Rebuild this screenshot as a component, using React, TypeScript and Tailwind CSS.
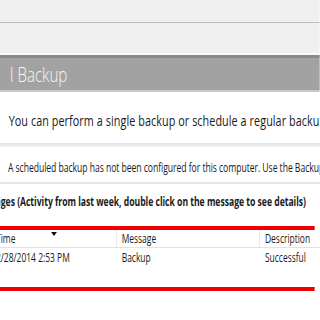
export default function App() {
  return (
    <div className="w-[320px] h-[320px] overflow-hidden bg-white">
      <div className="w-[444px] origin-top-left scale-x-[0.72] font-['Open_Sans',sans-serif] text-[#1a1a1a] leading-none">
        {/* top chrome */}
        <div className="h-[22px] bg-[#f0f0f0]" />
        <div className="h-[1px] bg-[#bcbcbc]" />
        <div className="h-[32px] bg-[#f0f0f0] border-b-2 border-[#fafafa]" />
        <div className="h-[3px] bg-[#8a8a8a]" />
        {/* title band */}
        <div className="h-[32px] bg-[#a2a2a2] pt-[6px] pl-[14px] whitespace-nowrap text-[21px] font-light text-[#f7f7f7]">
          l Backup
        </div>
        <div className="h-[2px] bg-[#c8c8c8]" />

        {/* intro */}
        <div className="h-[51px] pt-[21px] pl-[12px] text-[15px] tracking-[0.1px] whitespace-nowrap">
          You can perform a single backup or schedule a regular backup using this application.
        </div>
        <div className="h-[4px] bg-gradient-to-b from-[#e2e2e2] to-[#f4f4f4]" />
        <div className="h-[35px] pt-[15px] pl-[11px] text-[12px] tracking-[-0.08px] whitespace-nowrap">
          A scheduled backup has not been configured for this computer. Use the Backup Schedule Wizard or the Backup Schedule option.
        </div>
        <div className="h-[2px] bg-[#e6e6e6]" />

        {/* messages */}
        <div className="h-[42px] pt-[12px] flex whitespace-nowrap text-[12px] tracking-[-0.04px] font-bold">
          <div className="w-[1px] flex justify-end shrink-0">Messa</div>
          <span>ges (Activity from last week, double click on the message to see details)</span>
        </div>
        <div className="w-[437px] h-[4px] bg-[#ee0000]" />
        <div className="relative h-[18px] flex items-center text-[11.75px] whitespace-nowrap border-b border-[#e2e2e2]">
          <div className="w-[162px] h-full flex items-center border-r border-[#e2e2e2]">
            <div className="w-[1px] flex justify-end shrink-0">T</div>
            <span>ime</span>
          </div>
          <div className="w-[199px] h-full flex items-center pl-[7px] border-r border-[#e2e2e2]">Message</div>
          <div className="flex-1 h-full flex items-center pl-[7px]">Description</div>
          <div className="absolute left-[71px] top-[2px] w-0 h-0 border-l-[4px] border-r-[4px] border-t-[4px] border-l-transparent border-r-transparent border-t-black" />
        </div>
        <div className="h-[39px] pt-[4px] flex text-[11.75px] whitespace-nowrap">
          <div className="w-[162px] flex">
            <div className="w-[1px] flex justify-end shrink-0">2</div>
            <span>/28/2014 2:53 PM</span>
          </div>
          <div className="w-[199px] pl-[7px]">Backup</div>
          <div className="flex-1 pl-[7px]">Successful</div>
        </div>
        <div className="w-[437px] h-[4px] bg-[#ee0000]" />
      </div>
    </div>
  );
}
